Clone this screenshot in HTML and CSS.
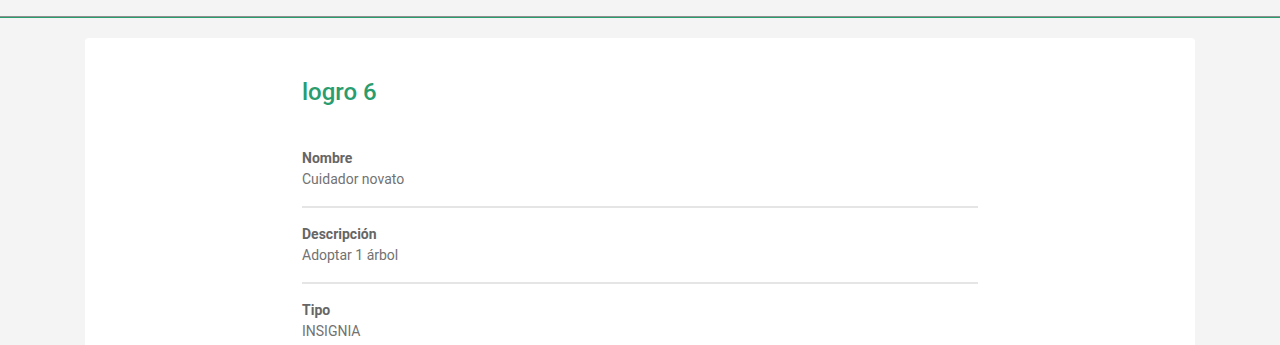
FILE: index.html
```html
<!DOCTYPE html>
<html lang="es">
<head>
<meta charset="utf-8">
<title>logro 6</title>
<link rel="stylesheet" href="styles.css">
</head>
<body>
<header class="topbar"></header>
<main class="page">
  <section class="card">
    <div class="content">
      <h1 class="title">logro 6</h1>
      <div class="field">
        <div class="label">Nombre</div>
        <div class="value">Cuidador novato</div>
      </div>
      <div class="field">
        <div class="label">Descripción</div>
        <div class="value">Adoptar 1 árbol</div>
      </div>
      <div class="field">
        <div class="label">Tipo</div>
        <div class="value">INSIGNIA</div>
      </div>
    </div>
  </section>
</main>
</body>
</html>
```
FILE: styles.css
```css
html, body {
  margin: 0;
  padding: 0;
  background: #f4f4f4;
  font-family: Roboto, "Liberation Sans", Arial, sans-serif;
}
.topbar {
  height: 16px;
  background: #f4f4f4;
  border-bottom: 1px solid #8f8f8f;
  box-shadow: 0 1px 0 #2a9d6f;
}
.page {
  padding: 21px 85px 0;
}
.card {
  background: #ffffff;
  border-radius: 4px 4px 0 0;
  padding: 40px 0 40px;
  min-height: 400px;
}
.content {
  width: 676px;
  margin: 0 auto;
}
.title {
  margin: 0 0 42px;
  font-size: 24px;
  line-height: 28px;
  font-weight: 500;
  color: #2a9d6f;
}
.field {
  border-bottom: 2px solid #e5e5e5;
  padding-bottom: 17px;
  margin-bottom: 16px;
}
.label {
  font-size: 14px;
  line-height: 20px;
  font-weight: 700;
  color: #666666;
  margin-bottom: 1px;
}
.value {
  font-size: 14px;
  line-height: 20px;
  color: #727272;
}
```
